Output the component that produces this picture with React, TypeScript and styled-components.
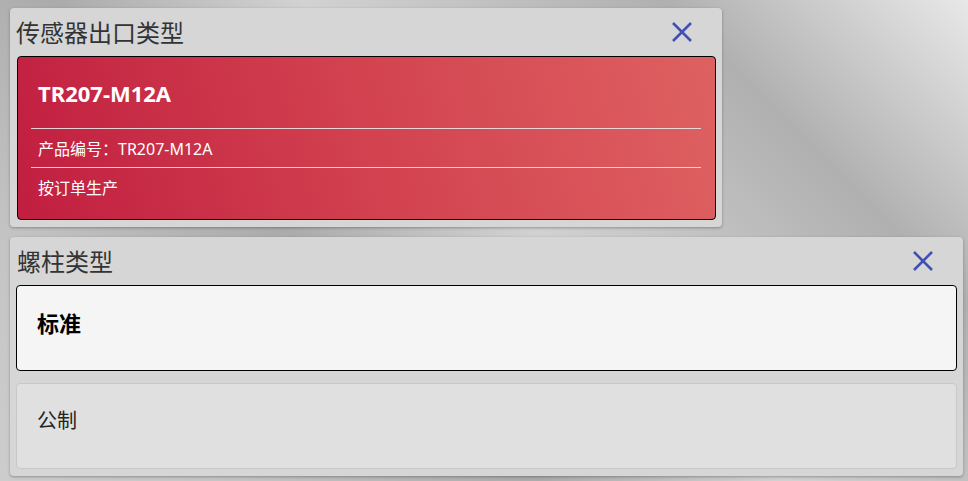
import styled, { createGlobalStyle } from "styled-components";

const GlobalStyle = createGlobalStyle`
  html, body {
    margin: 0;
    padding: 0;
    height: 100%;
  }
  body {
    font-family: "Noto Sans", "Noto Sans CJK SC", sans-serif;
    background: linear-gradient(45deg, #cdcdcd 0%, #c4c4c4 17%, #ababab 37%, #d2d2d2 54%, #b0b0b0 79%, #e8e8e8 100%);
    background-attachment: fixed;
    min-height: 100vh;
  }
`;

const Page = styled.div`
  display: flex;
  flex-direction: column;
  align-items: flex-start;
  gap: 10px;
  padding: 8px 5px 4px 10px;
`;

const Panel = styled.section<{ $width: number }>`
  width: ${(p) => p.$width}px;
  box-sizing: border-box;
  background: #d6d6d6;
  border-radius: 4px;
  box-shadow: 0 1px 3px rgba(0, 0, 0, 0.3);
  padding: 0 6px 7px 6px;
  display: flex;
  flex-direction: column;
  gap: 12px;
`;

const Header = styled.div<{ $indent: number }>`
  height: 48px;
  margin-bottom: -12px;
  display: flex;
  align-items: center;
  justify-content: space-between;
  padding: 0 24px 0 ${(p) => p.$indent}px;
`;

const Title = styled.h2`
  margin: 0;
  font-family: "Noto Sans CJK SC", sans-serif;
  font-size: 24px;
  font-weight: 400;
  color: #333;
  line-height: 1;
`;

const CloseButton = styled.button`
  width: 20px;
  height: 20px;
  padding: 0;
  border: none;
  background: none;
  cursor: pointer;
  display: flex;
`;

const Card = styled.div<{ $variant: "selected" | "active" | "plain" }>`
  border-radius: 4px;
  padding: 0 14px 13px 13px;
  margin-left: ${(p) => (p.$variant === "selected" ? 1 : 0)}px;
  color: ${(p) => (p.$variant === "selected" ? "#fff" : "#000")};
  border: 1px solid ${(p) => (p.$variant === "plain" ? "#c8c8c8" : "#000")};
  background: ${(p) =>
    p.$variant === "selected"
      ? "linear-gradient(75deg, #c11e40 0%, #d2424f 50%, #de6161 100%)"
      : p.$variant === "active"
      ? "#f5f5f5"
      : "#e0e0e0"};
`;

const CardHeading = styled.div<{ $bold?: boolean }>`
  height: 71px;
  display: flex;
  align-items: center;
  padding: 0 7px;
  font-size: ${(p) => (p.$bold ? 22 : 20)}px;
  font-weight: ${(p) => (p.$bold ? 700 : 400)};
  color: ${(p) => (p.$bold ? "inherit" : "#222")};
`;

const CardRow = styled.div`
  height: 38px;
  display: flex;
  align-items: center;
  padding: 0 7px;
  border-top: 1px solid rgba(230, 230, 230, 0.9);
  font-size: 16px;
`;

const CloseIcon = () => (
  <svg width="20" height="20" viewBox="0 0 20 20">
    <path d="M1 1 L19 19 M19 1 L1 19" stroke="#3f51b5" strokeWidth="2.6" fill="none" />
  </svg>
);

const App = () => {
  return (
    <>
      <GlobalStyle />
      <Page>
        <Panel $width={712}>
          <Header $indent={0}>
            <Title>传感器出口类型</Title>
            <CloseButton><CloseIcon /></CloseButton>
          </Header>
          <Card $variant="selected">
            <CardHeading $bold>TR207-M12A</CardHeading>
            <CardRow>产品编号：TR207-M12A</CardRow>
            <CardRow>按订单生产</CardRow>
          </Card>
        </Panel>
        <Panel $width={953}>
          <Header $indent={1}>
            <Title>螺柱类型</Title>
            <CloseButton><CloseIcon /></CloseButton>
          </Header>
          <Card $variant="active">
            <CardHeading $bold>标准</CardHeading>
          </Card>
          <Card $variant="plain">
            <CardHeading>公制</CardHeading>
          </Card>
        </Panel>
      </Page>
    </>
  );
};

export default App;
